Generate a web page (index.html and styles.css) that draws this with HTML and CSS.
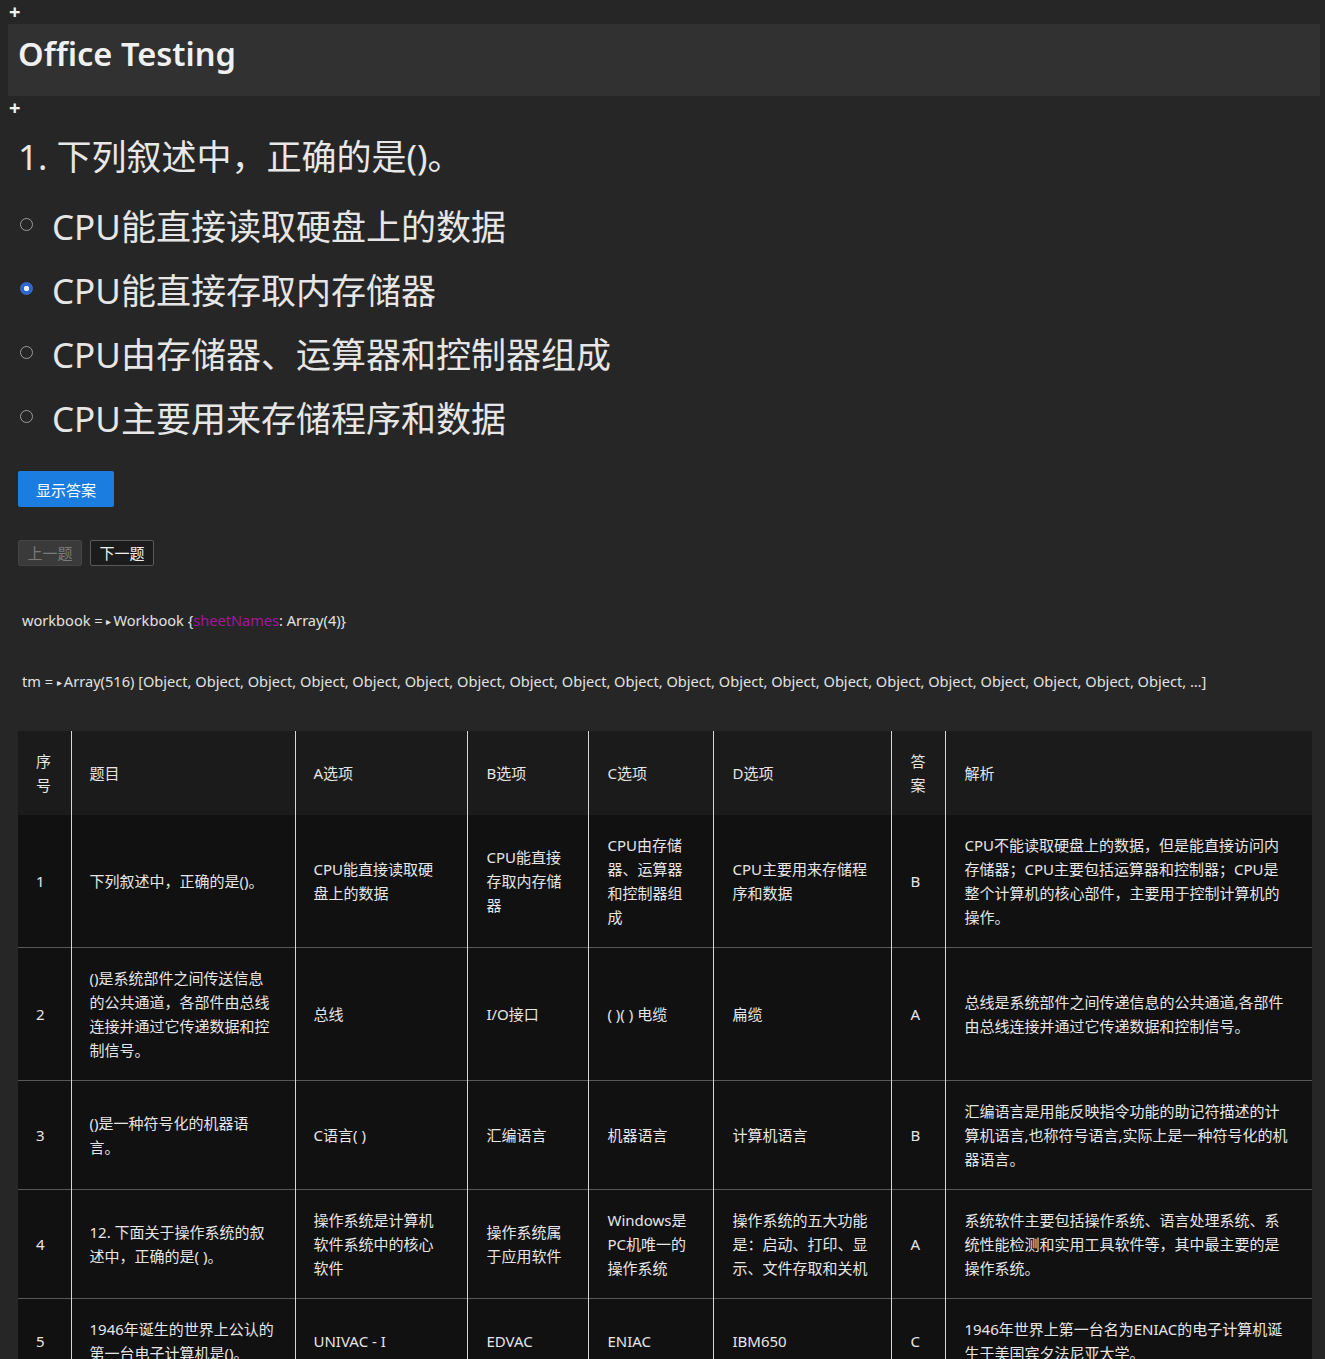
FILE: index.html
```html
<!DOCTYPE html>
<html lang="zh">
<head>
<meta charset="utf-8">
<title>Office Testing</title>
<link rel="stylesheet" href="styles.css">
</head>
<body>
<div class="plus">+</div>
<div class="title-cell"><h1 class="title">Office Testing</h1></div>
<div class="plus">+</div>

<section class="quiz">
  <h2 class="question">1. 下列叙述中，正确的是()。</h2>
  <div class="options">
    <label class="option"><input type="radio" name="q1"><span>CPU能直接读取硬盘上的数据</span></label>
    <label class="option"><input type="radio" name="q1" checked><span>CPU能直接存取内存储器</span></label>
    <label class="option"><input type="radio" name="q1"><span>CPU由存储器、运算器和控制器组成</span></label>
    <label class="option"><input type="radio" name="q1"><span>CPU主要用来存储程序和数据</span></label>
  </div>
  <button class="btn-primary">显示答案</button>
  <div class="nav">
    <button class="btn-nav" disabled>上一题</button>
    <button class="btn-nav">下一题</button>
  </div>
</section>

<div class="inspect workbook">workbook = <span class="caret">▸</span>Workbook {<span class="key">sheetNames</span>: Array(4)}</div>
<div class="inspect tm">tm = <span class="caret">▸</span>Array(516) [Object, Object, Object, Object, Object, Object, Object, Object, Object, Object, Object, Object, Object, Object, Object, Object, Object, Object, Object, Object, …]</div>

<table class="grid">
  <colgroup>
    <col class="c-no"><col class="c-q"><col class="c-a"><col class="c-b"><col class="c-c"><col class="c-d"><col class="c-ans"><col class="c-exp">
  </colgroup>
  <thead>
    <tr><th>序号</th><th>题目</th><th>A选项</th><th>B选项</th><th>C选项</th><th>D选项</th><th>答案</th><th>解析</th></tr>
  </thead>
  <tbody>
    <tr><td>1</td><td>下列叙述中，正确的是()。</td><td>CPU能直接读取硬盘上的数据</td><td>CPU能直接存取内存储器</td><td>CPU由存储器、运算器和控制器组成</td><td>CPU主要用来存储程序和数据</td><td>B</td><td>CPU不能读取硬盘上的数据，但是能直接访问内存储器；CPU主要包括运算器和控制器；CPU是整个计算机的核心部件，主要用于控制计算机的操作。</td></tr>
    <tr><td>2</td><td>()是系统部件之间传送信息的公共通道，各部件由总线连接并通过它传递数据和控制信号。</td><td>总线</td><td>I/O接口</td><td>( )( ) 电缆</td><td>扁缆</td><td>A</td><td>总线是系统部件之间传递信息的公共通道,各部件由总线连接并通过它传递数据和控制信号。</td></tr>
    <tr><td>3</td><td>()是一种符号化的机器语言。</td><td>C语言( )</td><td>汇编语言</td><td>机器语言</td><td>计算机语言</td><td>B</td><td>汇编语言是用能反映指令功能的助记符描述的计算机语言,也称符号语言,实际上是一种符号化的机器语言。</td></tr>
    <tr><td>4</td><td>12. 下面关于操作系统的叙述中，正确的是( )。</td><td>操作系统是计算机软件系统中的核心软件</td><td>操作系统属于应用软件</td><td>Windows是PC机唯一的操作系统</td><td>操作系统的五大功能是：启动、打印、显示、文件存取和关机</td><td>A</td><td>系统软件主要包括操作系统、语言处理系统、系统性能检测和实用工具软件等，其中最主要的是操作系统。</td></tr>
    <tr><td>5</td><td>1946年诞生的世界上公认的第一台电子计算机是()。</td><td>UNIVAC - I</td><td>EDVAC</td><td>ENIAC</td><td>IBM650</td><td>C</td><td>1946年世界上第一台名为ENIAC的电子计算机诞生于美国宾夕法尼亚大学。</td></tr>
  </tbody>
</table>
</body>
</html>
```

FILE: styles.css
```css
html, body {
  margin: 0;
  background: #262626;
}
body {
  padding: 0 5px 40px 8px;
  color: #e4e4e4;
  font-family: "Noto Sans", "Noto Sans CJK SC", sans-serif;
}
.plus {
  height: 24px;
  line-height: 24px;
  font-size: 20px;
  font-weight: 700;
  color: #f2f2f2;
  padding-left: 1px;
}
.title-cell {
  height: 72px;
  background: #313131;
  display: flex;
  align-items: flex-start;
  padding: 8px 0 0 10px;
  box-sizing: border-box;
}
.title {
  margin: 0;
  font-size: 32.6px;
  line-height: 44px;
  font-weight: 600;
  color: #f0f0f0;
}
.quiz {
  padding-left: 10px;
}
.question {
  margin: 10px 0 8px;
  font-size: 35px;
  line-height: 54px;
  font-weight: 400;
  color: #e8e8e8;
}
.options {
  display: flex;
  flex-direction: column;
}
.option {
  display: flex;
  align-items: center;
  height: 64px;
  font-size: 35px;
  color: #e6e6e6;
}
.option input {
  appearance: none;
  -webkit-appearance: none;
  width: 13px;
  height: 13px;
  margin: 0 19px 0 2px;
  border: 1px solid #9c9c9c;
  border-radius: 50%;
  background: transparent;
  flex: none;
}
.option input:checked {
  border-color: #3b6fd0;
  background: radial-gradient(circle, #e8eefc 0 2.5px, #2d66d0 3px);
}
.btn-primary {
  display: block;
  margin-top: 23px;
  width: 96px;
  height: 36px;
  padding: 0;
  border: 0;
  border-radius: 2px;
  background: #1b7ddf;
  color: #ffffff;
  font-family: "Noto Sans CJK SC", sans-serif;
  font-size: 15px;
}
.nav {
  display: flex;
  gap: 8px;
  margin-top: 33px;
}
.btn-nav {
  width: 64px;
  height: 26px;
  padding: 0;
  border: 1px solid #5a5a5a;
  border-radius: 2px;
  background: #1c1c1c;
  color: #f0f0f0;
  font-family: "Noto Sans CJK SC", sans-serif;
  font-size: 15px;
  line-height: 24px;
}
.btn-nav:disabled {
  background: #3a3a3a;
  border-color: #444;
  color: #7a7a7a;
}
.inspect {
  padding-left: 14px;
  font-size: 14.6px;
  line-height: 20px;
  color: #e2e2e2;
  white-space: nowrap;
}
.workbook {
  margin-top: 44px;
}
.tm {
  margin-top: 40px;
}
.caret {
  font-size: 10px;
  display: inline-block;
  width: 7px;
  vertical-align: 1px;
}
.key {
  color: #a3169e;
}
.grid {
  margin: 39px 0 0 10px;
  width: 1294px;
  table-layout: fixed;
  border-collapse: collapse;
  font-size: 15px;
  line-height: 24px;
  color: #e6e6e6;
}
.c-no { width: 53px; }
.c-q { width: 224px; }
.c-a { width: 172.95px; }
.c-b { width: 121px; }
.c-c { width: 125px; }
.c-d { width: 178px; }
.c-ans { width: 54px; }
.c-exp { width: 366.05px; }
.grid th,
.grid td {
  padding: 18px 20px 18px 18px;
  text-align: left;
  vertical-align: middle;
  border-left: 1px solid #d6d6d6;
  overflow-wrap: anywhere;
}
.grid th:first-child,
.grid td:first-child {
  border-left: 0;
  padding-right: 16px;
}
.grid th:last-child,
.grid td:last-child {
  padding-right: 22px;
}
.grid th {
  background: #1b1b1b;
  font-weight: 400;
}
.grid td {
  background: #111111;
  border-top: 1px solid #585858;
}
.grid tbody tr:first-child td {
  border-top: 0;
}
```
